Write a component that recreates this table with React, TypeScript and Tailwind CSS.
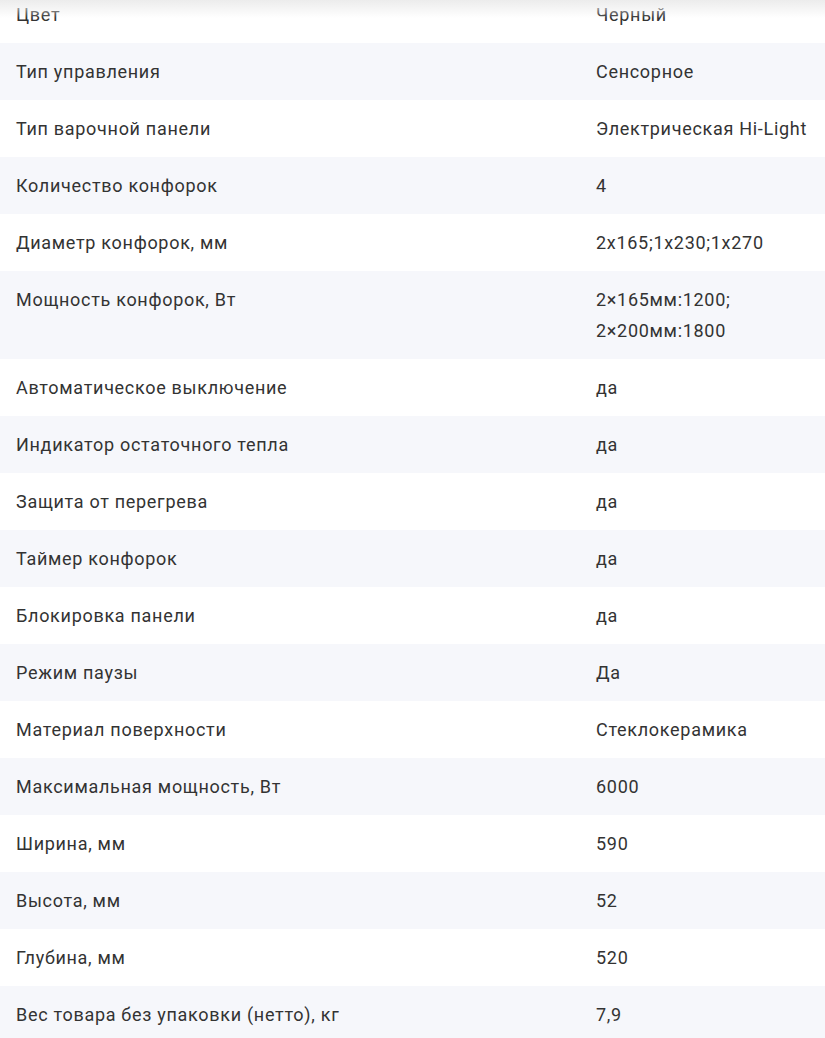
import React from 'react';

const specs: [string, string[]][] = [
  ['Цвет', ['Черный']],
  ['Тип управления', ['Сенсорное']],
  ['Тип варочной панели', ['Электрическая Hi-Light']],
  ['Количество конфорок', ['4']],
  ['Диаметр конфорок, мм', ['2х165;1х230;1х270']],
  ['Мощность конфорок, Вт', ['2×165мм:1200;', '2×200мм:1800']],
  ['Автоматическое выключение', ['да']],
  ['Индикатор остаточного тепла', ['да']],
  ['Защита от перегрева', ['да']],
  ['Таймер конфорок', ['да']],
  ['Блокировка панели', ['да']],
  ['Режим паузы', ['Да']],
  ['Материал поверхности', ['Стеклокерамика']],
  ['Максимальная мощность, Вт', ['6000']],
  ['Ширина, мм', ['590']],
  ['Высота, мм', ['52']],
  ['Глубина, мм', ['520']],
  ['Вес товара без упаковки (нетто), кг', ['7,9']],
];

export default function App() {
  return (
    <div className="relative w-[825px] h-[1038px] overflow-hidden bg-white font-['Roboto',sans-serif] text-[18px] tracking-[0.7px] text-[#333333]">
      <div className="-mt-[14px]">
        {specs.map(([label, value], i) => (
          <div
            key={label}
            className={`grid grid-cols-[580px_1fr] px-4 py-[13px] leading-[31px] ${i % 2 === 1 ? 'bg-[#f6f7fb]' : 'bg-white'}`}
          >
            <div className="whitespace-nowrap">{label}</div>
            <div className="whitespace-nowrap">
              {value.map((line) => (
                <div key={line}>{line}</div>
              ))}
            </div>
          </div>
        ))}
      </div>
      <div className="pointer-events-none absolute inset-x-0 top-0 h-[18px] bg-gradient-to-b from-[#ececec] to-transparent" />
    </div>
  );
}
